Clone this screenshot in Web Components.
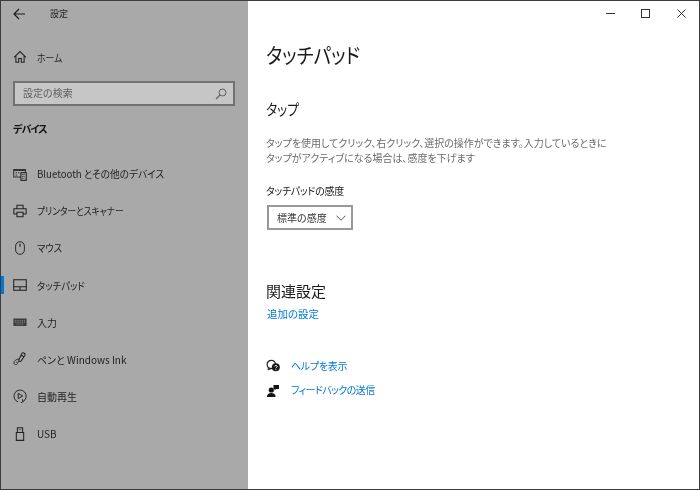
<!DOCTYPE html>
<html lang="ja"><head><meta charset="utf-8">
<style>
html,body{margin:0;padding:0;width:700px;height:490px;overflow:hidden;background:#fff}
body{font-family:"Noto Sans CJK JP","Noto Sans",sans-serif;font-feature-settings:"palt";color:#1a1a1a}
</style></head><body>
<settings-window>
  <settings-sidebar slot="side">
    <nav-item icon="home" slot="home" style="--sx:.88">ホーム</nav-item>
    <nav-item icon="bt" style="--sx:.965">Bluetooth とその他のデバイス</nav-item>
    <nav-item icon="printer" style="--sx:.87">プリンターとスキャナー</nav-item>
    <nav-item icon="mouse" style="--sx:.93">マウス</nav-item>
    <nav-item icon="touchpad" active style="--sx:.94">タッチパッド</nav-item>
    <nav-item icon="keyboard">入力</nav-item>
    <nav-item icon="pen">ペンと Windows Ink</nav-item>
    <nav-item icon="play">自動再生</nav-item>
    <nav-item icon="usb">USB</nav-item>
  </settings-sidebar>
  <touchpad-page slot="main"></touchpad-page>
</settings-window>
<script>
const ICONS={
home:'<path d="M1.200 8.300 8 1.800l6.800 6.500M3.300 6.800V14h3.200V9.800h3V14h3.200V6.800" fill="none" stroke="#222" stroke-width="1.200"/>',
bt:'<path d="M9 11.500H.8V3h13.400v3" fill="none" stroke="#333" stroke-width="1.200"/><path d="M.8 3h13.400v1.500H.8zM3 6h1.600v1.200H3zM5.600 6h1.600v1.200H5.600zM3 8.500h1.600v1.200H3z" fill="#333"/><rect x="9" y="6.500" width="6.200" height="8.800" fill="none" stroke="#222" stroke-width="1.200"/><path d="M10.400 8.500h3.400M10.400 10.700h3.400M10.400 12.900h3.400" stroke="#222" stroke-dasharray="1 .6"/>',
printer:'<path d="M4.500 5V1.500h7V5M4 11.500H1V5.500h14v6h-3M4.500 9.500h7v5h-7z" fill="none" stroke="#222" stroke-width="1.200"/>',
mouse:'<rect x="3" y=".8" width="10" height="14.400" rx="5" fill="none" stroke="#222" stroke-width="1.100"/><path d="M8 3.200v3.300" stroke="#222" stroke-width="1.400"/>',
touchpad:'<rect x=".8" y="2" width="14.400" height="12" fill="none" stroke="#222" stroke-width="1.200"/><path d="M.8 10h14.400M8 10v4" stroke="#222" stroke-width="1.200"/>',
keyboard:'<rect x=".5" y="4" width="15" height="8.500" fill="#3a3a3a"/><path d="M2 6.500h12M2 8.200h12M4 10.300h8" stroke="#a9a9a9" stroke-width=".8" stroke-dasharray="1.300 .8"/>',
pen:'<path d="M10.500 1c1.500-.8 4 1 3 3L9 10.500 6.500 11 6.800 8.500zM9 3.200l3.200 2.200" fill="none" stroke="#222" stroke-width="1.200"/><path d="M7 8.300c-2.500-.7-6.200 1.800-6 4.300.2 2 3 2.300 4 1 .8-1-.3-2.700-1.500-1.800" fill="none" stroke="#222" stroke-width="1"/>',
play:'<path d="M5.800 14.800A7 7 0 1 1 11.300 14.400" fill="none" stroke="#222" stroke-width="1.100"/><path d="M6 5l5 3-5 3z" fill="none" stroke="#222" stroke-width="1.100"/><path d="M8.800 15.700l2.700-1.200-.7-2.800" fill="none" stroke="#222" stroke-width="1.100"/>',
usb:'<path d="M5 .8h6v5.500H5zM3.800 6.300h8.400v9H3.800z" fill="none" stroke="#222" stroke-width="1.200"/><path d="M6.800 3h.9M8.500 3h.9" stroke="#222"/>'
};
function mk(name,html){customElements.define(name,class extends HTMLElement{
  constructor(){super();this.attachShadow({mode:"open"}).innerHTML=typeof html==="function"?html(this):html;}
});}
mk("settings-window",`<style>
:host{display:grid;grid-template-columns:247px 1fr;width:700px;height:490px;box-sizing:border-box;border:1px solid #3c3c3c;filter:blur(.3px)}
</style><slot name="side"></slot><slot name="main"></slot>`);
mk("settings-sidebar",`<style>
:host{display:flex;flex-direction:column;background:#a9a9a9;height:488px;min-width:0}
.top{display:flex;align-items:center;height:25px;font-size:9px;color:#1c1c1c}
.back{width:13px;margin-left:12px;margin-right:24px;display:flex}
.home{margin-top:12.5px}
.search{display:flex;align-items:center;justify-content:space-between;box-sizing:border-box;margin:5.500px 0 0 12px;height:25px;width:222px;border:2px solid #727272;background:#c6c6c6;padding:0 6px 2px 8px;font-size:10px;color:#5f5f5f}
.search svg{margin-top:2px}
.head{font-size:10px;font-weight:700;margin:12px 0 0 12px;height:22px;line-height:22px;color:#111;letter-spacing:-.9px}
.list{display:flex;flex-direction:column;margin-top:15px}
</style>
<div class="top"><span class="back"><svg width="13" height="12" viewBox="0 0 13 12"><path d="M6 1 1 6l5 5M1 6h11" fill="none" stroke="#1c1c1c" stroke-width="1.200"/></svg></span><span>設定</span></div>
<div class="home"><slot name="home"></slot></div>
<div class="search"><span>設定の検索</span><svg width="12" height="12" viewBox="0 0 12 12"><circle cx="7.500" cy="4.500" r="3.500" fill="none" stroke="#5f5f5f"/><path d="M5 7 1 11" stroke="#5f5f5f" stroke-width="1.100"/></svg></div>
<div class="head">デバイス</div>
<div class="list"><slot></slot></div>`);
mk("nav-item",el=>`<style>
:host{display:flex;align-items:center;height:37.14px;position:relative;font-size:10px;color:#1f1f1f;white-space:nowrap}
svg{width:14px;height:14px;margin-left:12px;margin-right:10px;flex:none}
.t{display:inline-block;transform:scaleX(var(--sx,1));transform-origin:0 50%}
.bar{position:absolute;left:0;top:9.5px;width:3px;height:18px;background:#0078d7;display:${el.hasAttribute("active")?"block":"none"}}
</style><span class="bar"></span><svg viewBox="0 0 16 16">${ICONS[el.getAttribute("icon")]}</svg><span class="t"><slot></slot></span>`);
mk("title-bar",`<style>
:host{display:flex;justify-content:flex-end;height:25px;align-items:center}
span{width:35.500px;display:flex;justify-content:center}
</style>
<span><svg width="9" height="9" viewBox="0 0 9 9"><path d="M0 4.500h9" stroke="#333"/></svg></span>
<span><svg width="9" height="9" viewBox="0 0 9 9"><rect x=".5" y=".5" width="8" height="8" fill="none" stroke="#333"/></svg></span>
<span><svg width="9" height="9" viewBox="0 0 9 9"><path d="M.5.500l8 8M8.500.500l-8 8" stroke="#333"/></svg></span>`);
mk("touchpad-page",`<style>
:host{display:flex;flex-direction:column;background:#fff;min-width:0;height:488px}
.body{display:flex;flex-direction:column;padding-left:18px}
h1{font:400 21px/30px "Noto Sans CJK JP",sans-serif;margin:13px 0 0;color:#1a1a1a}
h2{font:400 15px/22px "Noto Sans CJK JP",sans-serif;margin:0;color:#1a1a1a}
.sq{display:inline-block;transform-origin:0 50%;font-feature-settings:"palt"}
.tap{margin-top:29px}
p{font-size:10px;line-height:15px;color:#6a6a6a;margin:15px 0 0;width:345px;letter-spacing:-.02px}
.lab{font-size:10px;line-height:16px;margin-top:18px;color:#1a1a1a;letter-spacing:-.3px}
.sel{box-sizing:border-box;display:flex;align-items:center;justify-content:space-between;width:86px;height:25px;margin:6px 0 0 1px;border:2px solid #999;padding:0 5px 0 8px;font-size:10px;color:#333}
.rel{margin-top:50px}
a{color:#0078d7;font-size:10px;text-decoration:none;line-height:16px}
.more{margin:4px 0 0 1px;display:block;font-size:10.500px}
.help{display:flex;flex-direction:column;gap:8px;margin-top:36px}
.row{display:flex;align-items:center;height:16px}
.row svg{width:14px;height:14px;margin-right:11px}
</style>
<title-bar></title-bar>
<div class="body">
<h1><span class="sq" style="transform:scaleX(.88)">タッチパッド</span></h1>
<h2 class="tap"><span class="sq" style="transform:scaleX(.85)">タップ</span></h2>
<p>タップを使用してクリック、右クリック、選択の操作ができます。入力しているときにタップがアクティブになる場合は、感度を下げます</p>
<div class="lab">タッチパッドの感度</div>
<div class="sel"><span>標準の感度</span><svg width="10" height="6" viewBox="0 0 10 6"><path d="M.5.700l4.500 4.500L9.500.700" fill="none" stroke="#555"/></svg></div>
<h2 class="rel">関連設定</h2>
<a class="more">追加の設定</a>
<div class="help">
<div class="row"><svg viewBox="0 0 14 14"><circle cx="5.300" cy="5.500" r="4.200" fill="none" stroke="#222" stroke-width="1.200"/><path d="M2.500 8.500 2 11l3-1.500" fill="none" stroke="#222"/><circle cx="9.800" cy="8.300" r="4" fill="#1a1a1a"/><path d="M8.500 7.400c.2-1.200 2.700-1.200 2.700.2 0 .9-1.300.9-1.300 1.700M9.900 10v.8" fill="none" stroke="#fff" stroke-width=".9"/></svg><a style="letter-spacing:-.3px">ヘルプを表示</a></div>
<div class="row"><svg viewBox="0 0 14 14"><circle cx="5.300" cy="7" r="2.600" fill="#111"/><path d="M1 14c0-3 1.800-4 4.300-4s4.300 1 4.300 4z" fill="#111"/><path d="M7.500 2H13v4H10L8.500 7.500V6h-1z" fill="#111"/></svg><a style="letter-spacing:-.6px">フィードバックの送信</a></div>
</div>
</div>`);
</script>
</body></html>
